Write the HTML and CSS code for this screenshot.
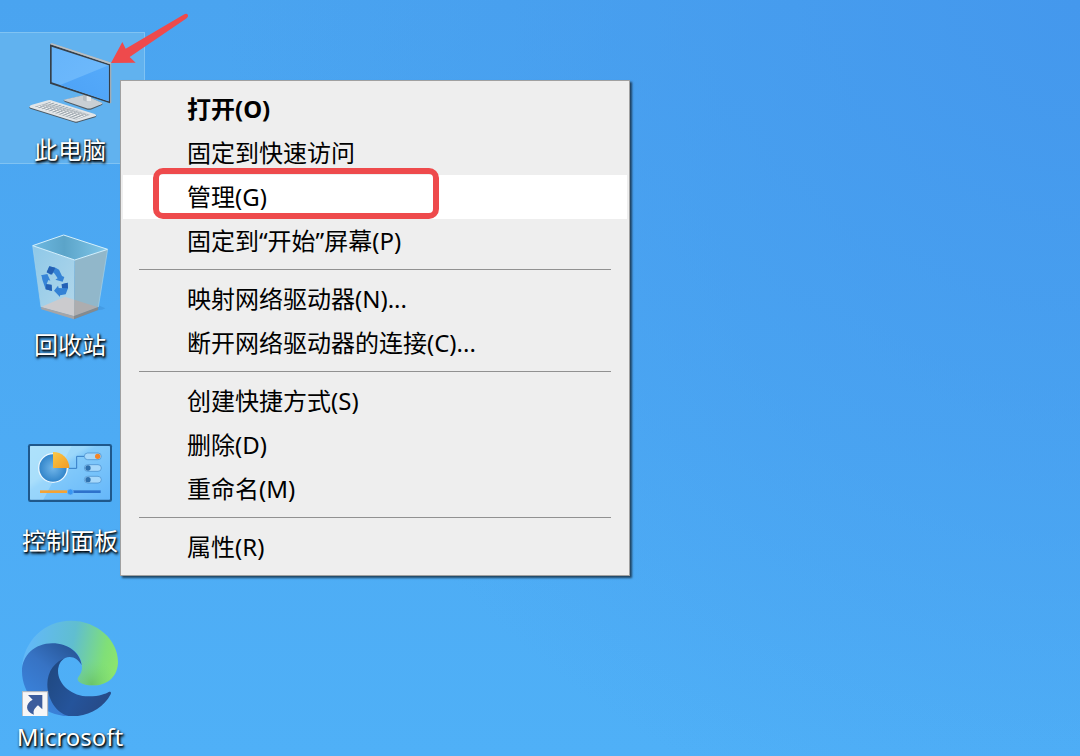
FILE: index.html
```html
<!DOCTYPE html>
<html lang="zh-CN">
<head>
<meta charset="utf-8">
<meta name="viewport" content="width=device-width, initial-scale=1">
<title>桌面</title>
<link rel="stylesheet" href="styles.css">
</head>
<body>
<main class="desktop">
  <nav class="shortcuts" aria-label="桌面图标">
    <button class="shortcut shortcut-selected" type="button">
      <svg class="shortcut-icon" viewBox="66 96 288 288" aria-hidden="true">
        <defs>
          <linearGradient id="screen" x1="0" y1="0" x2="1" y2="1"><stop offset="0" stop-color="#66b4fa"/><stop offset="1" stop-color="#71bbfc"/></linearGradient>
          <linearGradient id="glare" x1="0" y1="1" x2="1" y2="0"><stop offset="0" stop-color="#4da2f6"/><stop offset="1" stop-color="#55aafa"/></linearGradient>
          <pattern id="keys" width="11" height="8" patternUnits="userSpaceOnUse" patternTransform="matrix(1 .28 -.85 .45 0 0)"><rect width="11" height="8" fill="#949ea6"/><rect x="1" y="1" width="8" height="5" fill="#f6f7f8"/></pattern>
        </defs>
        <path d="M191 297l62-14 54 24q2 4-3 6l-28 12q-9 3-18 0l-62-22q-6-3-5-6z" fill="#4f5c66"/>
        <path d="M191 296l62-14 54 24q1 2-3 4l-28 11q-9 3-18 0l-62-21q-5-2-5-4z" fill="#c9cfd4"/>
        <path d="M249 279l24 8v13q-12 4-24-2z" fill="#b5bdc3"/><path d="M260 282l13 5v13q-6 2-13 0z" fill="#e5e8ea"/>
        <path d="M150 130l6-3 178 58v120l-5 3z" fill="#a3abb2"/>
        <path d="M150 130l180 60v117l-180-59z" fill="#353f49"/>
        <path d="M155 137l171 56v108l-171-57z" fill="url(#screen)"/>
        <path d="M326 193v108l-145-49z" fill="url(#glare)"/>
        <path d="M150 129l5-2 179 58-3 5z" fill="#b9c0c5"/>
        <path d="M88 317v4q2 2 8 4l126 39q7 3 13 0l51-15q3-2 3-6z" fill="#4b5964"/>
        <path d="M88 317q2-4 8-6l48-13q7-2 14 1l126 40q6 3 4 6l-53 16q-7 2-14 0L94 321q-6-2-6-4z" fill="#e1e5e8"/>
        <path d="M104 317l48-15 119 39-43 15z" fill="url(#keys)"/>
      </svg>
      <span class="shortcut-label">此电脑</span>
    </button>
    <button class="shortcut" type="button">
      <svg class="shortcut-icon" viewBox="66 24 288 288" aria-hidden="true">
        <defs>
          <linearGradient id="bin-left" x1="0" y1="0" x2="1" y2="1"><stop offset="0" stop-color="#8ec8e8"/><stop offset="1" stop-color="#b2d7ea"/></linearGradient>
          <linearGradient id="bin-inside" x1="0" y1="0" x2="1" y2="0"><stop offset="0" stop-color="#6eb9e2"/><stop offset=".42" stop-color="#5ba4c9"/><stop offset="1" stop-color="#83c8ea"/></linearGradient>
        </defs>
        <path d="M222 297l72-26q18-2 22-6l-18-8z" fill="#3b90d7" opacity=".5"/>
        <path d="M98 77l126 43-2 168-99-27z" fill="url(#bin-left)"/>
        <path d="M323 88l-99 32-2 168 73-27z" fill="#91b7ca"/>
        <path d="M98 77l93-32 132 43-99 32z" fill="url(#bin-inside)"/>
        <path d="M123 261l72-31 28 9-1 50z" fill="#cbcbce"/><path d="M223 239l72 23-73 27z" fill="#adadaf"/>
        <path d="M123 261l99 27v10l-98-30z" fill="#a5a5a7"/><path d="M222 288l73-27-1 9-72 28z" fill="#868a8d"/>
        <path d="M98 77l93-32 132 43-99 32z" fill="none" stroke="#d5f0fc" stroke-width="3"/>
        <path d="M98 77l25 184M323 88l-28 173" fill="none" stroke="#a8d3e8" stroke-width="2"/>
        <path d="M140 157l8-18 20 5 9 5 9 19 7 3-5 14-22-6 7-4-9-14-7-6-5 9z" fill="#3583d6"/>
        <path d="M140 157l8-18 18 4-10 21z" fill="#2460b4"/>
        <path d="M123 166l19-4 9 20-6-2-5 12 14 3 2 18-19-5-10-29-2-10z" fill="#3684d8"/>
        <path d="M138 193l17 1 1 19-19-5z" fill="#2460b4"/>
        <path d="M185 193l18-5 1 17-7 18-17 3v5l-18-19 12-15 2 7 11 1z" fill="#3482d5"/>
        <path d="M185 193l18-5 1 17-18-1z" fill="#2460b4"/>
      </svg>
      <span class="shortcut-label">回收站</span>
    </button>
    <button class="shortcut" type="button">
      <svg class="shortcut-icon" viewBox="66 -18 288 288" aria-hidden="true">
        <defs>
          <linearGradient id="panel" x1="0" y1="0" x2="1" y2="1"><stop offset="0" stop-color="#a4ddfb"/><stop offset=".35" stop-color="#9bd7fb"/><stop offset=".42" stop-color="#83cafa"/><stop offset="1" stop-color="#65b7fa"/></linearGradient>
          <radialGradient id="dial"><stop offset="0" stop-color="#72b6e9"/><stop offset="1" stop-color="#2f83c9"/></radialGradient>
          <linearGradient id="slice" x1="0" y1="0" x2="1" y2="1"><stop offset="0" stop-color="#fbc847"/><stop offset="1" stop-color="#f29b25"/></linearGradient>
        </defs>
        <rect x="84" y="42" width="252" height="174" rx="7" fill="#1f588b"/>
        <rect x="90" y="48" width="240" height="161" rx="2" fill="url(#panel)"/>
        <path d="M90 48h125L130 209H90z" fill="#c0ebfd" opacity=".38"/>
        <circle cx="159" cy="114" r="43" fill="url(#dial)" stroke="#eaf7ff" stroke-width="4"/>
        <path d="M159 114V66a48 48 0 0 1 49 48z" fill="url(#slice)"/>
        <path d="M207 115h23V79h24" fill="none" stroke="#347bc5" stroke-width="3"/>
        <g fill="#a6d8fb" stroke="#438ac8" stroke-width="2"><rect x="253" y="69" width="51" height="20" rx="10"/><rect x="253" y="104" width="51" height="20" rx="10"/><rect x="253" y="139" width="51" height="20" rx="10"/></g>
        <circle cx="293" cy="79" r="8" fill="#f38427"/><circle cx="264" cy="114" r="8" fill="#2e70ae"/><circle cx="264" cy="149" r="8" fill="#2e70ae"/>
        <path d="M120 185h86" stroke="#f4a335" stroke-width="8"/><path d="M216 185h86" stroke="#2e72cb" stroke-width="8"/>
        <circle cx="211" cy="186" r="9" fill="#3996f2" stroke="#72bdfb" stroke-width="2"/>
      </svg>
      <span class="shortcut-label">控制面板</span>
    </button>
    <button class="shortcut" type="button">
      <svg class="shortcut-icon" viewBox="66 42 288 288" aria-hidden="true">
        <defs>
          <linearGradient id="edge-top" x1="70" y1="120" x2="350" y2="180" gradientUnits="userSpaceOnUse"><stop offset="0" stop-color="#62b8fb"/><stop offset=".5" stop-color="#60bed0"/><stop offset=".85" stop-color="#80df78"/><stop offset="1" stop-color="#8ce56d"/></linearGradient>
          <linearGradient id="edge-side" x1="80" y1="280" x2="210" y2="120" gradientUnits="userSpaceOnUse"><stop offset="0" stop-color="#3a83dc"/><stop offset=".55" stop-color="#3773c4"/><stop offset="1" stop-color="#285799"/></linearGradient>
          <linearGradient id="edge-base" x1="145" y1="200" x2="330" y2="300" gradientUnits="userSpaceOnUse"><stop offset="0" stop-color="#204982"/><stop offset=".5" stop-color="#25549b"/><stop offset="1" stop-color="#274984"/></linearGradient>
          <radialGradient id="edge-tip" cx="275" cy="235" r="75" gradientUnits="userSpaceOnUse"><stop offset="0" stop-color="#62b95a" stop-opacity=".65"/><stop offset="1" stop-color="#7ad673" stop-opacity="0"/></radialGradient>
        </defs>
        <path d="M66 186C70 105 134 44 212 44c80 0 142 58 142 123 0 42-29 70-72 71-27 1-50-8-49-20 1-7 13-15 13-33 0-49-44-72-88-72-48 0-84 31-92 73z" fill="url(#edge-top)"/>
        <path d="M66 186C70 105 134 44 212 44c80 0 142 58 142 123 0 42-29 70-72 71-27 1-50-8-49-20 1-7 13-15 13-33 0-49-44-72-88-72-48 0-84 31-92 73z" fill="url(#edge-tip)"/>
        <path d="M66 196c0-47 38-84 91-84 49 0 84 30 88 66-8-15-21-25-36-25-19 0-35 17-35 43-27 49 10 116 57 135-92 8-165-55-165-135z" fill="url(#edge-side)"/>
        <path d="M196 156c-14 6-22 20-22 38 0 43 43 77 92 77 34 0 51-8 60-13 5-2 9 1 6 7-22 42-66 66-116 66-41 0-74-48-74-96 0-41 25-69 54-79z" fill="url(#edge-base)"/>
        <rect x="67" y="257" width="76" height="76" fill="#f6f6f7" stroke="#b9b8ba" stroke-width="3"/>
        <path d="M84 267h43v43l-13-12c-10 9-16 16-12 28-28-10-26-34-4-45z" fill="#3c5c9c"/>
      </svg>
      <span class="shortcut-label">Microsoft</span>
    </button>
  </nav>

  <div class="context-menu" role="menu" aria-label="此电脑">
    <button class="menu-item menu-item-default" type="button" role="menuitem">打开(O)</button>
    <button class="menu-item" type="button" role="menuitem">固定到快速访问</button>
    <button class="menu-item menu-item-active" type="button" role="menuitem">管理(G)<span class="highlight-frame"></span></button>
    <button class="menu-item" type="button" role="menuitem">固定到“开始”屏幕(P)</button>
    <hr class="menu-separator">
    <button class="menu-item" type="button" role="menuitem">映射网络驱动器(N)...</button>
    <button class="menu-item" type="button" role="menuitem">断开网络驱动器的连接(C)...</button>
    <hr class="menu-separator">
    <button class="menu-item" type="button" role="menuitem">创建快捷方式(S)</button>
    <button class="menu-item" type="button" role="menuitem">删除(D)</button>
    <button class="menu-item" type="button" role="menuitem">重命名(M)</button>
    <hr class="menu-separator">
    <button class="menu-item" type="button" role="menuitem">属性(R)</button>
  </div>

  <svg class="pointer-arrow" viewBox="324 30 252 174" aria-hidden="true">
    <path d="M333 189l34-63 10 20L553 43q8-4 11 3 1 5-4 9L389 171l18 17z" fill="#ee4a4c"/>
  </svg>
</main>
</body>
</html>
```
FILE: styles.css
```css
* {
  box-sizing: border-box;
}

body {
  margin: 0;
  font-family: "Noto Sans", "Noto Sans CJK SC", sans-serif;
  font-size: 24px;
}

button {
  margin: 0;
  border: 0;
  background: none;
  font: inherit;
}

.desktop {
  position: relative;
  height: 100vh;
  overflow: hidden;
  background:
    radial-gradient(circle at 100% 0, #4498ed 0, rgba(68, 152, 237, 0) 65%),
    linear-gradient(#4aa4f0, #4fb0f7);
}

.shortcuts {
  display: flex;
  flex-direction: column;
  align-items: flex-start;
  gap: 64px;
  padding-top: 32px;
}

.shortcut {
  display: flex;
  flex-direction: column;
  align-items: center;
  gap: 5px;
  width: 145px;
  height: 132px;
  padding: 0 5px 0 0;
  color: #fff;
}

.shortcut-selected {
  border: 1px solid #80c3f3;
  border-left: 0;
  padding-right: 4px;
  background: #61b2ef;
}

.shortcut-icon {
  flex: none;
  width: 96px;
  height: 96px;
}

.shortcut-label {
  width: 120px;
  line-height: 32px;
  text-align: center;
  text-shadow: 1px 1px 2px #000, 1px 2px 3px #000;
}

.context-menu {
  position: absolute;
  top: 80px;
  left: 120px;
  width: 510px;
  padding: 6px 2px;
  border: 1px solid #a0a0a0;
  background: #eee;
  box-shadow: 2px 2px 2px rgba(0, 0, 0, 0.6);
}

.menu-item {
  display: block;
  position: relative;
  width: 100%;
  padding: 0 24px 0 64px;
  color: #000;
  line-height: 44px;
  text-align: left;
}

.menu-item-default {
  font-weight: 700;
}

.menu-item-active {
  background: #fff;
}

.menu-separator {
  height: 1px;
  margin: 6px 16px 7px;
  border: 0;
  background: #919191;
}

.highlight-frame {
  position: absolute;
  top: -7px;
  left: 30px;
  width: 286px;
  height: 51px;
  border: 6px solid #ee4a4c;
  border-radius: 10px;
}

.pointer-arrow {
  position: absolute;
  top: 10px;
  left: 108px;
  width: 84px;
  height: 58px;
}
```
